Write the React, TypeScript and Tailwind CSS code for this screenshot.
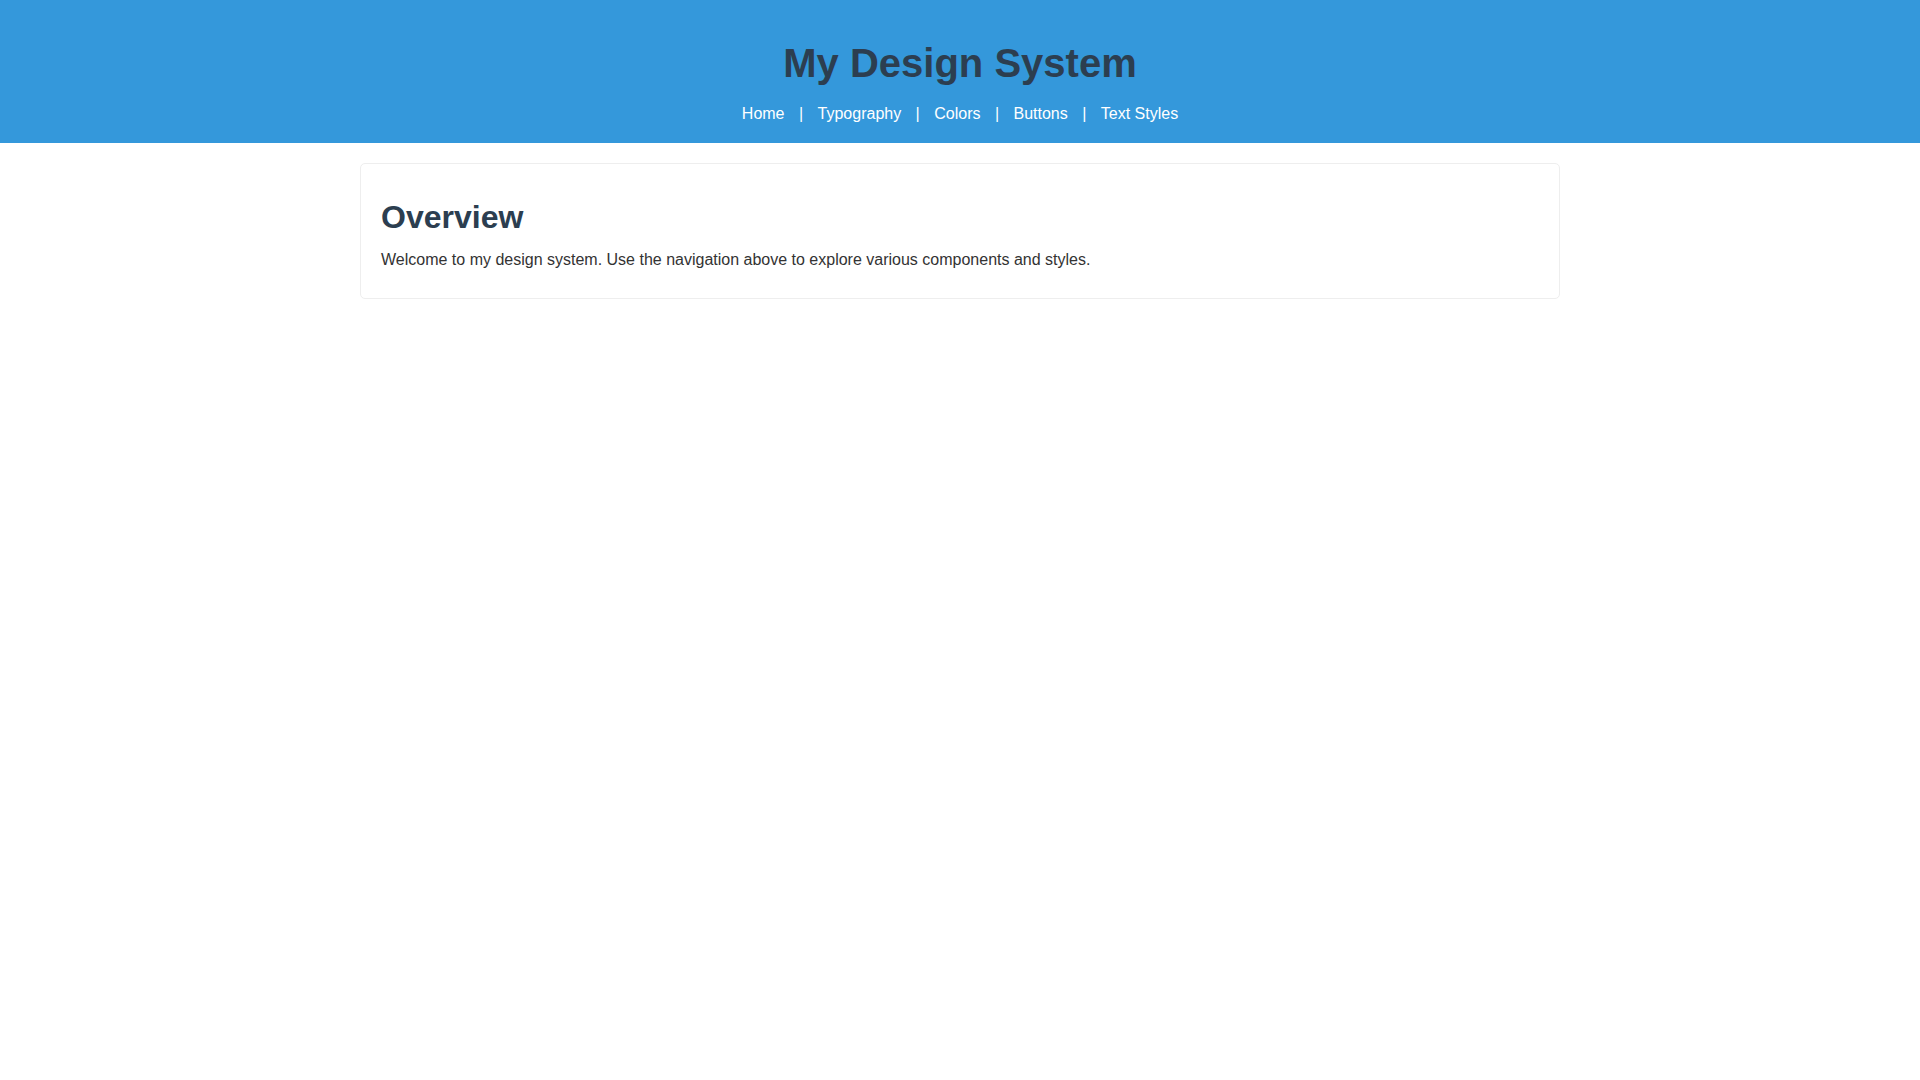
const NAV = ["Home", "Typography", "Colors", "Buttons", "Text Styles"];

export default function App() {
  return (
    <div className="min-h-screen bg-white font-['Liberation_Sans',Arial,sans-serif] text-[#333]">
      <header className="bg-[#3498db] pt-5 pb-5 text-center">
        <h1 className="mt-[20px] mb-[18px] text-[40px] leading-[46px] font-bold text-[#2c3e50]">
          My Design System
        </h1>
        <nav className="text-base leading-[19px] text-white">
          {NAV.map((item, i) => (
            <span key={item}>
              {i > 0 && " | "}
              <a href="#" className="mx-[10px] text-white">
                {item}
              </a>
            </span>
          ))}
        </nav>
      </header>

      <main className="mx-auto mt-5 w-[1200px]">
        <section className="rounded-[5px] border border-[#eee] bg-white px-5 pt-5 pb-[19px]">
          <h2 className="mt-[15px] mb-[15px] text-[32px] leading-[37px] font-bold text-[#2c3e50]">
            Overview
          </h2>
          <p className="mb-[10px] text-base leading-[18px]">
            Welcome to my design system. Use the navigation above to explore various components and styles.
          </p>
        </section>
      </main>
    </div>
  );
}
